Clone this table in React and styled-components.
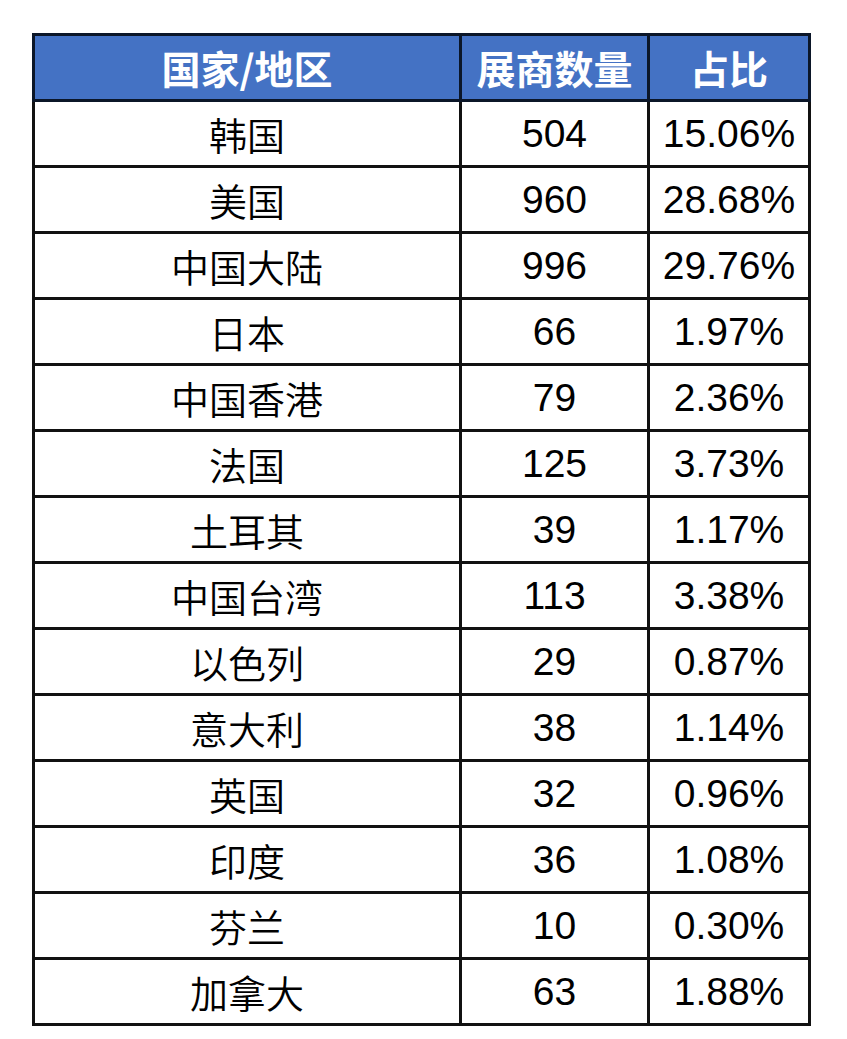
import React from 'react';
import styled, { createGlobalStyle } from 'styled-components';

const GlobalStyle = createGlobalStyle`
  html, body {
    margin: 0;
    padding: 0;
    background: #ffffff;
  }
  body {
    font-family: "Liberation Sans", "Noto Sans CJK SC", sans-serif;
  }
`;

const Page = styled.div`
  padding: 33px 0 0 32px;
`;

const Table = styled.table`
  border-collapse: collapse;
  table-layout: fixed;
  width: 776px;
  border: 3px solid #0b1628;
`;

const Col = styled.col`
  width: ${(p) => p.$w}px;
`;

const HeadCell = styled.th`
  height: 63px;
  padding: 0;
  background: #4472c4;
  color: #ffffff;
  border: 3px solid #0b1628;
  font-family: "Noto Sans CJK SC", sans-serif;
  font-weight: 700;
  font-size: 39px;
  line-height: 1;
  text-align: center;
  vertical-align: middle;
`;

const Cell = styled.td`
  height: 63px;
  padding: 0;
  border: 3px solid #111111;
  color: #000000;
  text-align: center;
  vertical-align: middle;
  line-height: 1;
  font-family: ${(p) =>
    p.$cjk ? '"Noto Sans CJK SC", sans-serif' : '"Liberation Sans", Arial, sans-serif'};
  font-size: ${(p) => (p.$cjk ? 38 : 39)}px;
  font-weight: ${(p) => (p.$cjk ? 350 : 400)};
`;

const rows = [
  ['韩国', '504', '15.06%'],
  ['美国', '960', '28.68%'],
  ['中国大陆', '996', '29.76%'],
  ['日本', '66', '1.97%'],
  ['中国香港', '79', '2.36%'],
  ['法国', '125', '3.73%'],
  ['土耳其', '39', '1.17%'],
  ['中国台湾', '113', '3.38%'],
  ['以色列', '29', '0.87%'],
  ['意大利', '38', '1.14%'],
  ['英国', '32', '0.96%'],
  ['印度', '36', '1.08%'],
  ['芬兰', '10', '0.30%'],
  ['加拿大', '63', '1.88%'],
];

export default function App() {
  return (
    <>
      <GlobalStyle />
      <Page>
        <Table>
          <colgroup>
            <Col $w={427} />
            <Col $w={188} />
            <Col $w={161} />
          </colgroup>
          <thead>
            <tr>
              <HeadCell>国家/地区</HeadCell>
              <HeadCell>展商数量</HeadCell>
              <HeadCell>占比</HeadCell>
            </tr>
          </thead>
          <tbody>
            {rows.map(([name, count, share]) => (
              <tr key={name}>
                <Cell $cjk>{name}</Cell>
                <Cell>{count}</Cell>
                <Cell>{share}</Cell>
              </tr>
            ))}
          </tbody>
        </Table>
      </Page>
    </>
  );
}
